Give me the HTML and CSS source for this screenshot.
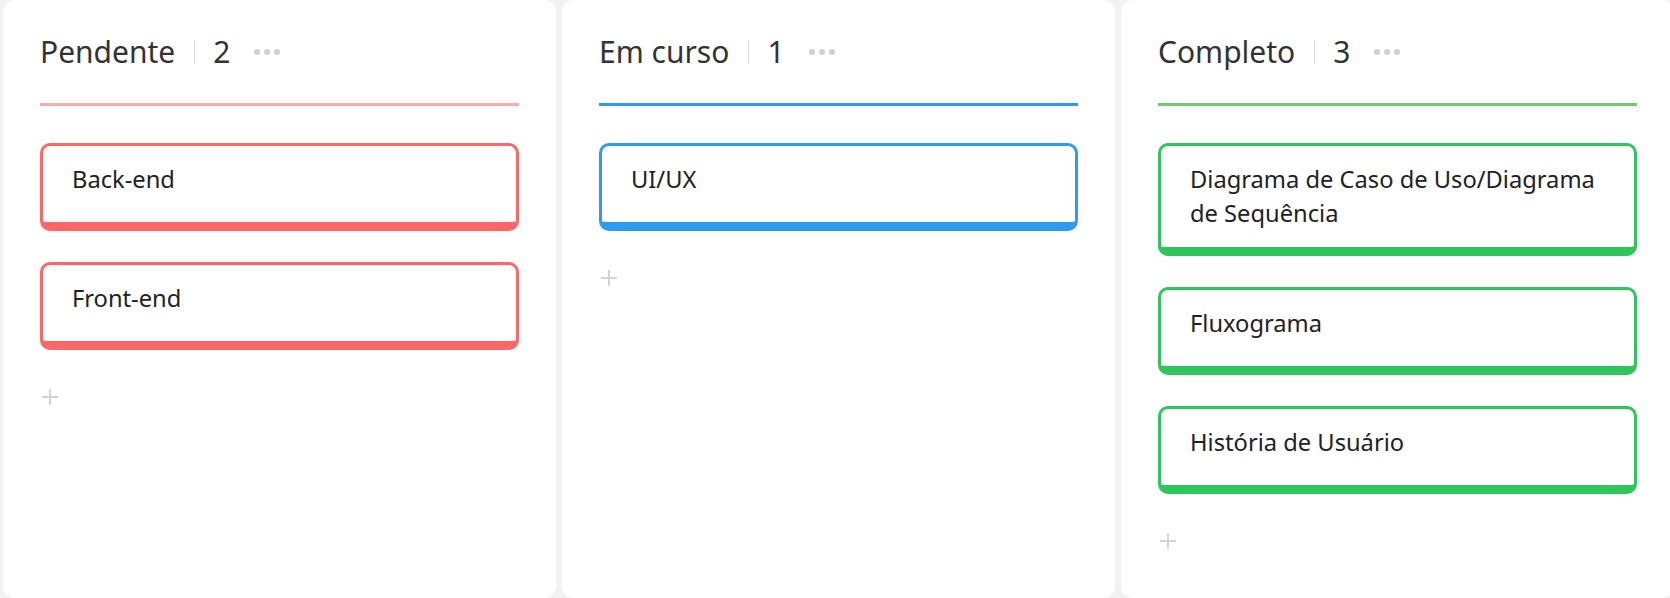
FILE: index.html
```html
<!DOCTYPE html>
<html lang="pt">
<head>
<meta charset="utf-8">
<title>Quadro</title>
<link rel="stylesheet" href="styles.css">
</head>
<body>
<div class="board">
  <section class="column col-red">
    <header class="col-head">
      <span class="col-title">Pendente</span>
      <span class="col-sep"></span>
      <span class="col-count">2</span>
      <span class="col-more"><i></i><i></i><i></i></span>
    </header>
    <div class="col-line"></div>
    <div class="cards">
      <div class="card">Back-end</div>
      <div class="card">Front-end</div>
    </div>
    <div class="add"><svg viewBox="0 0 18 18" width="18" height="18"><path d="M9 1v16M1 9h16" stroke="#d4d4d4" stroke-width="2" fill="none"/></svg></div>
  </section>
  <section class="column col-blue">
    <header class="col-head">
      <span class="col-title">Em curso</span>
      <span class="col-sep"></span>
      <span class="col-count">1</span>
      <span class="col-more"><i></i><i></i><i></i></span>
    </header>
    <div class="col-line"></div>
    <div class="cards">
      <div class="card">UI/UX</div>
    </div>
    <div class="add"><svg viewBox="0 0 18 18" width="18" height="18"><path d="M9 1v16M1 9h16" stroke="#d4d4d4" stroke-width="2" fill="none"/></svg></div>
  </section>
  <section class="column col-green">
    <header class="col-head">
      <span class="col-title">Completo</span>
      <span class="col-sep"></span>
      <span class="col-count">3</span>
      <span class="col-more"><i></i><i></i><i></i></span>
    </header>
    <div class="col-line"></div>
    <div class="cards">
      <div class="card">Diagrama de Caso de Uso/Diagrama de Sequência</div>
      <div class="card">Fluxograma</div>
      <div class="card">História de Usuário</div>
    </div>
    <div class="add"><svg viewBox="0 0 18 18" width="18" height="18"><path d="M9 1v16M1 9h16" stroke="#d4d4d4" stroke-width="2" fill="none"/></svg></div>
  </section>
</div>
</body>
</html>
```

FILE: styles.css
```css
html, body {
  margin: 0;
  padding: 0;
  height: 100%;
  overflow: hidden;
  background: #f2f2f2;
  font-family: "Noto Sans", "Open Sans", sans-serif;
}

.board {
  display: flex;
  gap: 6px;
  padding-left: 3px;
  height: 598px;
}

.column {
  flex: 0 0 553px;
  box-sizing: border-box;
  background: #fff;
  border-radius: 12px;
  padding: 0 37px;
  height: 598px;
}

.col-head {
  display: flex;
  align-items: center;
  height: 103px;
  color: #333;
}

.col-title {
  font-size: 30px;
  line-height: 40px;
}

.col-sep {
  width: 1px;
  height: 24px;
  background: #dcdcdc;
  margin: 0 18px 0 19px;
}

.col-count {
  font-size: 30px;
  line-height: 40px;
}

.col-more {
  display: flex;
  gap: 4px;
  margin-left: 24px;
}

.col-more i {
  display: block;
  width: 6px;
  height: 6px;
  border-radius: 50%;
  background: #cfcfcf;
}

.col-line {
  height: 3px;
}

.cards {
  display: flex;
  flex-direction: column;
  gap: 31px;
  margin-top: 37px;
}

.card {
  box-sizing: border-box;
  min-height: 88px;
  border: 3px solid;
  border-bottom-width: 9px;
  border-radius: 10px;
  padding: 16px 28px 17px 29px;
  font-size: 23.7px;
  line-height: 34px;
  color: #222;
  background: #fff;
}

.add {
  margin-top: 38px;
  margin-left: 1px;
  height: 18px;
}

.add svg {
  display: block;
}

.col-red .col-line { background: #ffabab; }
.col-red .card { border-color: #ff6666; }

.col-blue .col-line { background: #2f9bef; }
.col-blue .card { border-color: #2f9bef; }

.col-green .col-line { background: #6fca70; }
.col-green .card { border-color: #2ec65a; }
```
